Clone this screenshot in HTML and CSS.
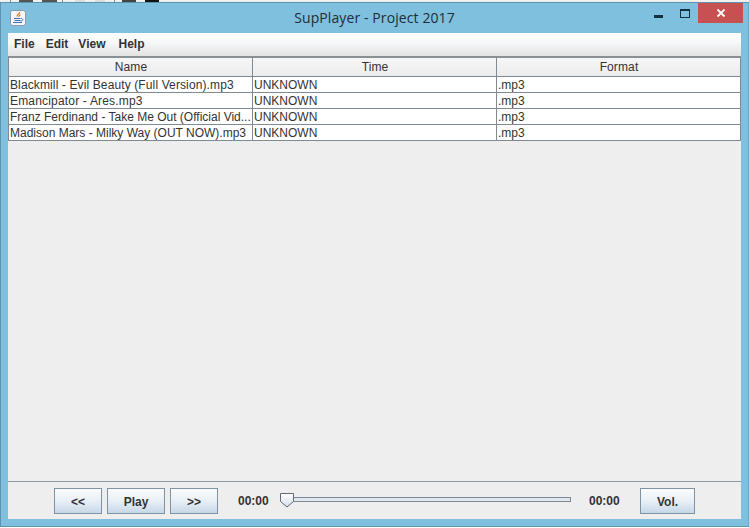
FILE: index.html
```html
<!DOCTYPE html>
<html lang="en">
<head>
<meta charset="utf-8">
<title>SupPlayer - Project 2017</title>
<link rel="stylesheet" href="styles.css">
</head>
<body>
<div class="taskstrip">
  <span class="strip-bit b1"></span><span class="strip-bit b2"></span><span class="strip-bit b3"></span><span class="strip-bit b4"></span><span class="strip-bit b5"></span><span class="strip-bit b6"></span><span class="strip-bit b7"></span><span class="strip-bit b8"></span><span class="strip-bit b9"></span>
</div>
<div class="window">
  <header class="titlebar">
    <div class="appicon">
      <svg width="16" height="16" viewBox="0 0 16 16">
        <rect x="0.5" y="0.5" width="15" height="15" rx="2" fill="#f4f6fa" stroke="#8b98ad"/>
        <path d="M9.5 2C10.5 3.5 6.5 4.5 7 6.5M10.5 4.5C10 5.5 8.5 5.5 9 7" fill="none" stroke="#d9822b" stroke-width="1.3"/>
        <path d="M4 8.5h6.5M4.5 10.5h6M3 12.5h9" stroke="#3f6fb0" stroke-width="1.1"/>
        <path d="M11 8.5c2.5 0 2.5 2.5-.5 2.5" fill="none" stroke="#3f6fb0"/>
      </svg>
    </div>
    <h1 class="title">SupPlayer - Project 2017</h1>
    <div class="controls">
      <span class="ctl-min"></span>
      <span class="ctl-max"></span>
      <span class="ctl-close">
        <svg width="10" height="10" viewBox="0 0 10 10"><path d="M1.5 1.5l7 7M8.5 1.5l-7 7" stroke="#fff" stroke-width="1.8"/></svg>
      </span>
    </div>
  </header>
  <div class="client">
    <nav class="menubar">
      <span>File</span><span>Edit</span><span class="m-view">View</span><span class="m-help">Help</span>
    </nav>
    <div class="tablearea">
      <table class="grid">
        <colgroup><col class="c1"><col class="c2"><col class="c3"></colgroup>
        <thead>
          <tr><th>Name</th><th>Time</th><th>Format</th></tr>
        </thead>
        <tbody>
          <tr><td class="wide">Blackmill - Evil Beauty (Full Version).mp3</td><td>UNKNOWN</td><td>.mp3</td></tr>
          <tr><td class="wider">Emancipator - Ares.mp3</td><td>UNKNOWN</td><td>.mp3</td></tr>
          <tr><td>Franz Ferdinand - Take Me Out (Official Vid...</td><td>UNKNOWN</td><td>.mp3</td></tr>
          <tr><td>Madison Mars - Milky Way (OUT NOW).mp3</td><td>UNKNOWN</td><td>.mp3</td></tr>
        </tbody>
      </table>
    </div>
    <footer class="transport">
      <button class="btn btn-skip">&lt;&lt;</button>
      <button class="btn btn-play">Play</button>
      <button class="btn btn-skip">&gt;&gt;</button>
      <span class="clock clock-start">00:00</span>
      <div class="slider">
        <svg class="thumb" width="16" height="16" viewBox="0 0 16 16">
          <defs><linearGradient id="tg" x1="0" y1="0" x2="0" y2="1"><stop offset="0" stop-color="#ffffff"/><stop offset="1" stop-color="#d3deea"/></linearGradient></defs>
          <path d="M1.5 1.5h13v8l-6.5 5.5-6.5-5.5z" fill="url(#tg)" stroke="#5f6b78"/>
        </svg>
      </div>
      <span class="clock clock-end">00:00</span>
      <button class="btn btn-vol">Vol.</button>
    </footer>
  </div>
</div>
</body>
</html>
```

FILE: styles.css
```css
* { box-sizing: border-box; }
html, body { margin: 0; padding: 0; }
body {
  width: 749px;
  height: 528px;
  overflow: hidden;
  background: #fff;
  font-family: "Liberation Sans", Arial, sans-serif;
  color: #333;
}
.taskstrip {
  height: 2px;
  display: flex;
  background: #f1f1f1;
}
.strip-bit { height: 2px; background: #444; }
.b1 { width: 1px; margin-left: 10px; background: #888; }
.b2 { width: 14px; margin-left: 8px; background: #555; }
.b3 { width: 15px; margin-left: 9px; background: #555; }
.b4 { width: 1px; margin-left: 5px; background: #888; }
.b5 { width: 10px; margin-left: 12px; background: #ddd; }
.b6 { width: 10px; margin-left: 10px; background: #ddd; }
.b7 { width: 1px; margin-left: 9px; background: #888; }
.b8 { width: 14px; margin-left: 7px; background: #444; }
.b9 { width: 14px; margin-left: 9px; background: #111; }
.window {
  height: 525px;
  background: #7fc0df;
  border: 1px solid #5d93ad;
  border-right-color: #6ba6c2;
  padding: 0 7px 7px 7px;
  display: flex;
  flex-direction: column;
}
.titlebar {
  height: 30px;
  flex: none;
  display: flex;
  align-items: flex-start;
  position: relative;
}
.appicon { margin: 7px 0 0 2px; height: 16px; }
.title {
  position: absolute;
  left: 0;
  right: 0;
  top: 6px;
  margin: 0;
  text-align: center;
  font: 400 14px/18px "Open Sans", sans-serif;
  letter-spacing: 0.1px;
  color: #1f2d36;
}
.controls {
  margin-left: auto;
  margin-right: -2px;
  display: flex;
  position: relative;
}
.ctl-min {
  width: 9px;
  height: 3px;
  margin-top: 12px;
  background: #12303f;
}
.ctl-max {
  width: 10px;
  height: 9px;
  margin: 6px 0 0 17px;
  border: 1px solid #12303f;
  border-top-width: 2px;
}
.ctl-close {
  width: 45px;
  height: 20px;
  margin-left: 8px;
  background: #c75050;
  display: flex;
  align-items: center;
  justify-content: center;
}
.client {
  flex: 1;
  min-height: 0;
  background: #eeeeee;
  display: flex;
  flex-direction: column;
}
.menubar {
  height: 23px;
  flex: none;
  display: flex;
  align-items: center;
  gap: 11px;
  padding: 0 0 1px 6px;
  font-size: 12px;
  font-weight: 700;
  color: #333;
  background: linear-gradient(#ffffff, #f6f7f8 45%, #e2e2e2);
}
.m-view { margin-left: -1px; }
.m-help { margin-left: 2px; }
.tablearea {
  flex: 1;
  min-height: 0;
  border-bottom: 1px solid #8b9aa6;
}
.grid {
  width: 732px;
  table-layout: fixed;
  border-collapse: collapse;
  font-size: 12px;
  background: #fff;
}
.c1 { width: 244px; }
.c2 { width: 244px; }
.c3 { width: 244px; }
.grid th {
  height: 19px;
  padding: 2px 0 0 1px;
  line-height: 13px;
  font-weight: 400;
  letter-spacing: 0.12px;
  text-align: center;
  color: #333;
  background: linear-gradient(#f6f6f6, #ececec);
  border: 1px solid #7f8a93;
  border-top-width: 2px;
  border-top-color: #8a8f94;
}
.grid td {
  height: 16px;
  padding: 1px 0 0 1px;
  line-height: 14px;
  white-space: nowrap;
  overflow: hidden;
  color: #333;
  border: 1px solid #7f8a93;
}
.grid td.wide { letter-spacing: 0.12px; }
.grid td.wider { letter-spacing: 0.18px; }
.transport {
  height: 37px;
  flex: none;
  display: flex;
  align-items: flex-start;
  padding: 6px 0 0 46px;
}
.btn {
  height: 26px;
  padding: 1px 0 0;
  font-family: inherit;
  font-size: 12px;
  font-weight: 700;
  color: #333;
  border: 1px solid #7f93a6;
  background: linear-gradient(#fbfcfd, #e9eff6 50%, #c6d7e8);
}
.btn-skip { width: 48px; }
.btn-play { width: 58px; margin: 0 5px; }
.btn-vol { width: 55px; margin-left: 20px; }
.clock {
  font-size: 12px;
  font-weight: 700;
  line-height: 27px;
  color: #333;
}
.clock-start { margin-left: 20px; width: 31px; }
.clock-end { margin-left: 18px; width: 31px; }
.slider {
  position: relative;
  width: 285px;
  height: 5px;
  margin: 9px 0 0 17px;
  border: 1px solid #7d8894;
  background: #e3e8ee;
}
.thumb {
  position: absolute;
  left: -8px;
  top: -6px;
}
```
